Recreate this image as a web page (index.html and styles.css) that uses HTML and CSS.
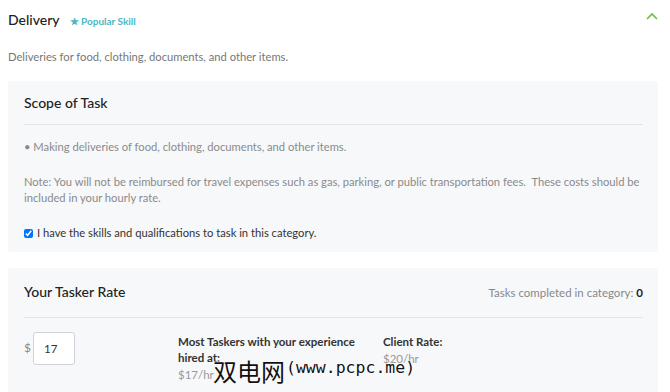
FILE: index.html
```html
<!DOCTYPE html>
<html>
<head>
<meta charset="utf-8">
<link rel="stylesheet" href="styles.css">
</head>
<body>
<div class="page">
  <div class="head">
    <div class="title-group">
      <h1 class="title">Delivery</h1>
      <span class="popular">★ Popular Skill</span>
    </div>
    <svg class="chevron" width="12" height="8" viewBox="0 0 12 8"><path d="M1 7 L6 2 L11 7" fill="none" stroke="#6cbf3f" stroke-width="1.6"/></svg>
  </div>
  <p class="desc">Deliveries for food, clothing, documents, and other items.</p>

  <section class="panel scope">
    <h2 class="panel-title">Scope of Task</h2>
    <div class="divider"></div>
    <p class="muted">• Making deliveries of food, clothing, documents, and other items.</p>
    <p class="muted note">Note: You will not be reimbursed for travel expenses such as gas, parking, or public transportation fees.&nbsp; These costs should be included in your hourly rate.</p>
    <label class="check"><input type="checkbox" checked> I have the skills and qualifications to task in this category.</label>
  </section>

  <section class="panel rate">
    <div class="rate-head">
      <h2 class="panel-title">Your Tasker Rate</h2>
      <span class="completed">Tasks completed in category: <b>0</b></span>
    </div>
    <div class="divider"></div>
    <div class="rate-body">
      <div class="rate-input">
        <span class="dollar">$</span>
        <div class="box">17</div>
      </div>
      <div class="stat most">
        <div class="stat-label">Most Taskers with your experience hired at:</div>
        <div class="stat-val">$17/hr</div>
      </div>
      <div class="stat client">
        <div class="stat-label">Client Rate:</div>
        <div class="stat-val">$20/hr</div>
      </div>
    </div>
  </section>
  <div class="watermark"><span class="wm-cjk">双电网</span><span class="wm-lat">(www.pcpc.me)</span></div>
</div>
</body>
</html>
```
FILE: styles.css
```css
* { box-sizing: border-box; }
html, body { margin: 0; padding: 0; background: #fff; }
body { font-family: "Lato", "Liberation Sans", sans-serif; color: #333; overflow: hidden; }
.page { position: relative; width: 650px; margin-left: 8px; padding-top: 8px; }
.head { display: flex; justify-content: space-between; align-items: center; height: 22px; }
.title-group { display: flex; align-items: baseline; gap: 10px; }
.title { margin: 0; font-size: 14px; font-weight: 500; color: #222; }
.popular { font-size: 10px; font-weight: 700; color: #4ab8bf; }
.chevron { margin-top: -6px; margin-right: 0; }
.desc { margin: 19px 0 0; font-size: 11.2px; color: #777; line-height: 16px; }
.panel { background: #f7f8fa; border-radius: 3px; padding: 0 15px 0 16px; }
.scope { margin-top: 16px; padding-top: 13px; padding-bottom: 11px; }
.panel-title { margin: 0; font-size: 14px; font-weight: 500; color: #222; line-height: 18px; }
.divider { height: 1px; background: #e3e4e8; margin-top: 12px; }
.muted { margin: 0; font-size: 11.2px; color: #8a8a8a; line-height: 16px; }
.scope .divider + .muted { margin-top: 14px; }
.note { margin-top: 19px; }
.check { display: flex; align-items: center; margin-top: 19px; font-size: 11.2px; color: #333; line-height: 16px; }
.check input { margin: 0 4px 0 0; width: 9px; height: 9px; }
.rate { margin-top: 16px; padding-top: 15px; padding-bottom: 30px; }
.rate-head { display: flex; justify-content: space-between; align-items: center; }
.completed { font-size: 11.5px; color: #888; }
.completed b { color: #222; }
.rate .divider { margin-top: 16px; }
.rate-body { display: flex; align-items: flex-start; margin-top: 14px; }
.rate-input { display: flex; align-items: flex-start; width: 154px; }
.dollar { font-size: 12px; color: #888; margin-top: 8px; width: 9px; }
.box { width: 42px; height: 33px; background: #fff; border: 1px solid #cfd2d8; border-radius: 3px; font-size: 11.5px; color: #333; padding: 9px 0 0 10px; }
.stat-label { font-size: 11.5px; font-weight: 700; color: #333; line-height: 16px; }
.stat-val { font-size: 11.5px; color: #999; line-height: 18px; }
.most { width: 205px; padding-top: 2px; }
.most .stat-label { width: 185px; }
.client { padding-top: 2px; }
.watermark { position: absolute; left: 205px; top: 357px; display: flex; align-items: flex-start; color: #111; white-space: nowrap; text-shadow: 0 0 2px #fff, 0 0 2px #fff, 0 0 1px #fff; }
.wm-cjk { font-family: "Noto Sans CJK SC", sans-serif; font-size: 24px; line-height: 28px; }
.wm-lat { font-family: "DejaVu Sans Mono", monospace; font-size: 16.5px; line-height: 20px; margin-top: 1px; margin-left: 1px; }
```
